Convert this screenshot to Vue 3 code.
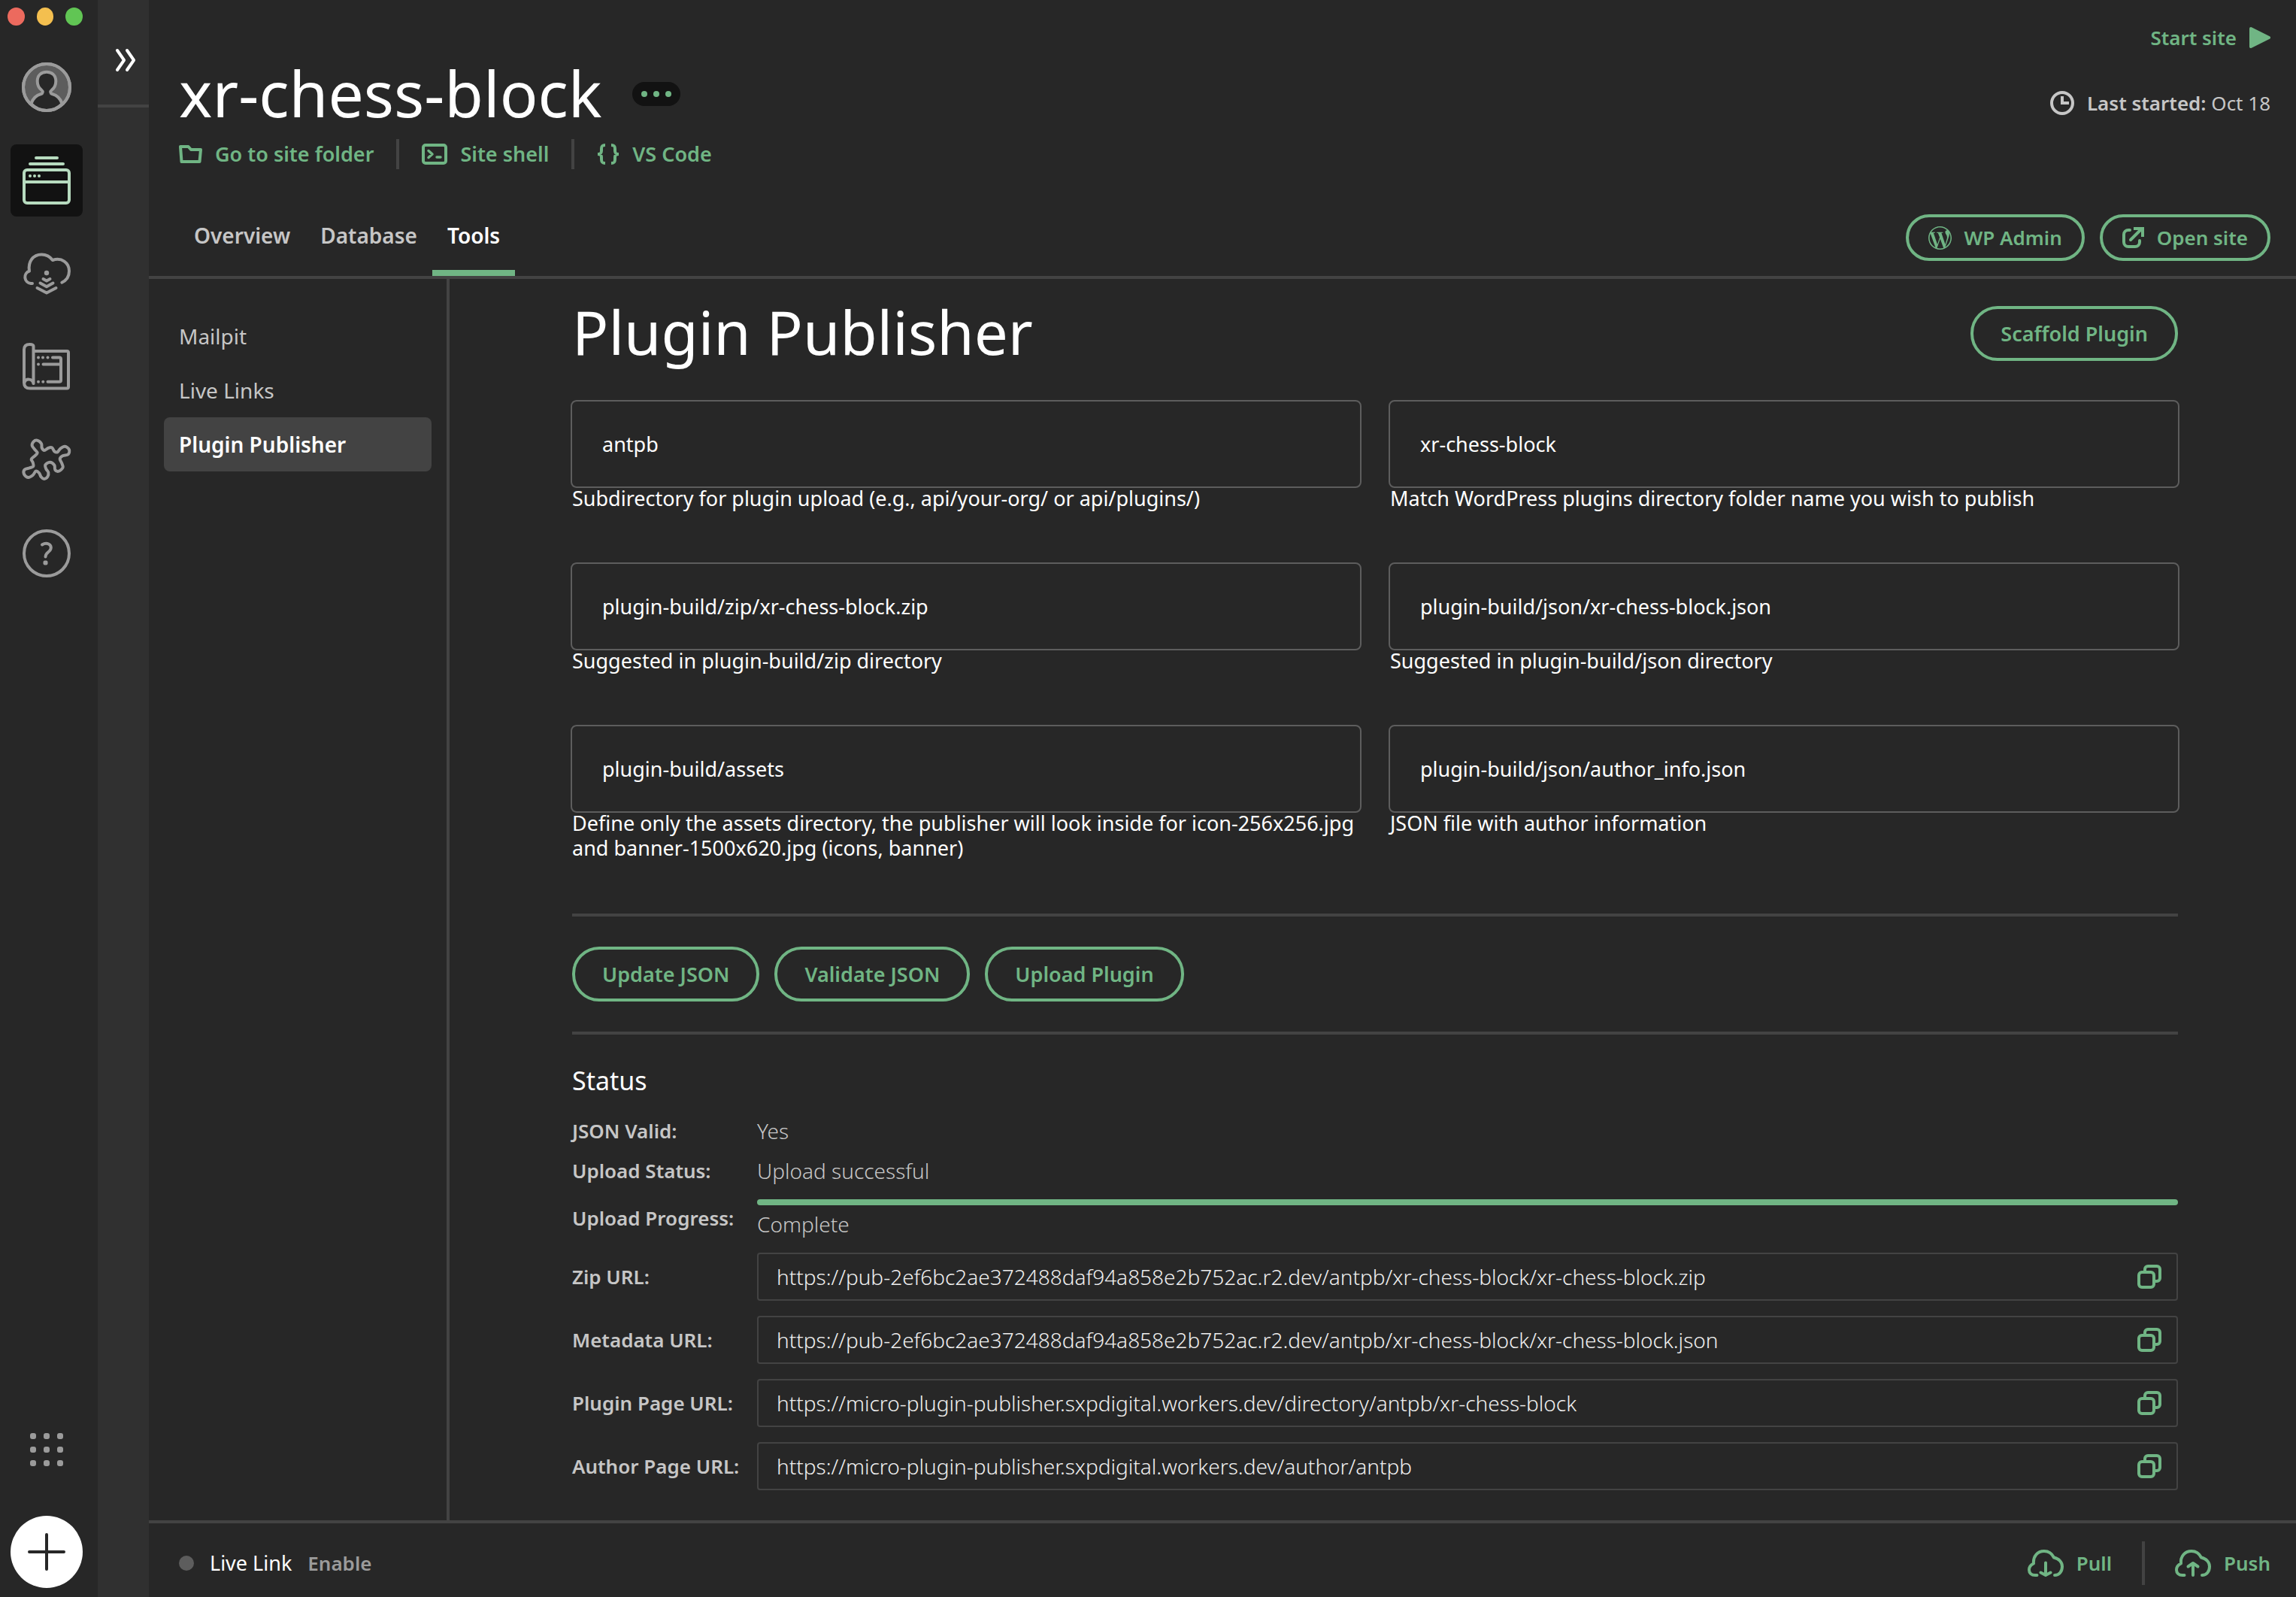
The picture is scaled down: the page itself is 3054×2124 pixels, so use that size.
<script setup>
import { reactive, ref } from 'vue'

// Closed Catmull-Rom curve through a list of points, as SVG path data
function smoothPath(points) {
  const n = points.length
  const at = (i) => points[(i + n) % n]
  let d = `M${at(0)[0]} ${at(0)[1]}`
  for (let i = 0; i < n; i++) {
    const [a, b, c, e] = [at(i - 1), at(i), at(i + 1), at(i + 2)]
    d += `C${b[0] + (c[0] - a[0]) / 6} ${b[1] + (c[1] - a[1]) / 6} ${c[0] - (e[0] - b[0]) / 6} ${c[1] - (e[1] - b[1]) / 6} ${c[0]} ${c[1]}`
  }
  return d + 'Z'
}

const puzzle = smoothPath(
  [
    [88, 782], [105, 795], [107, 812], [117, 822], [132, 813], [147, 811], [157, 826], [169, 829], [181, 815],
    [199, 806], [216, 819], [212, 838], [190, 844], [179, 856], [186, 872], [191, 890], [175, 905], [160, 900],
    [157, 881], [139, 869], [121, 880], [124, 896], [133, 910], [130, 927], [116, 936], [104, 928], [96, 912],
    [83, 905], [71, 921], [52, 930], [36, 917], [38, 899], [58, 892], [73, 886], [71, 870], [65, 857],
    [78, 845], [89, 832], [80, 820], [68, 803], [74, 787],
  ].map(([x, y]) => [x / 3 - 8, y / 3 - 256]),
)

const dots = [6, 24, 42].flatMap((y) => [6, 24, 42].map((x) => ({ x, y })))

const tabs = ['Overview', 'Database', 'Tools']
const tools = ['Mailpit', 'Live Links', 'Plugin Publisher']
const activeTab = ref('Tools')
const activeTool = ref('Plugin Publisher')

const fields = reactive([
  { id: 'subdirectory', value: 'antpb', help: 'Subdirectory for plugin upload (e.g., api/your-org/ or api/plugins/)' },
  { id: 'folder', value: 'xr-chess-block', help: 'Match WordPress plugins directory folder name you wish to publish' },
  { id: 'zip', value: 'plugin-build/zip/xr-chess-block.zip', help: 'Suggested in plugin-build/zip directory' },
  { id: 'json', value: 'plugin-build/json/xr-chess-block.json', help: 'Suggested in plugin-build/json directory' },
  { id: 'assets', value: 'plugin-build/assets', help: 'Define only the assets directory, the publisher will look inside for icon-256x256.jpg and banner-1500x620.jpg (icons, banner)' },
  { id: 'author', value: 'plugin-build/json/author_info.json', help: 'JSON file with author information' },
])

const actions = ['Update JSON', 'Validate JSON', 'Upload Plugin']

const bucket = 'https://pub-2ef6bc2ae372488daf94a858e2b752ac.r2.dev/antpb/xr-chess-block'
const workers = 'https://micro-plugin-publisher.sxpdigital.workers.dev'
const urls = [
  { id: 'zip-url', label: 'Zip URL:', value: `${bucket}/xr-chess-block.zip` },
  { id: 'metadata-url', label: 'Metadata URL:', value: `${bucket}/xr-chess-block.json` },
  { id: 'plugin-url', label: 'Plugin Page URL:', value: `${workers}/directory/antpb/xr-chess-block` },
  { id: 'author-url', label: 'Author Page URL:', value: `${workers}/author/antpb` },
]
</script>

<template>
  <div class="app">
    <nav class="rail" aria-label="Main">
      <div class="lights"><i class="red"></i><i class="yellow"></i><i class="green"></i></div>
      <button class="rail-item" aria-label="Account">
        <svg width="66" height="66" viewBox="0 0 66 66" fill="none" stroke="#9b9b9b" stroke-width="4">
          <circle cx="33" cy="33" r="31" fill="#5d5d5d" />
          <path fill="#272727" d="M12.3 55C15 47 20 43.500 25.500 42C28 41.200 28.500 38.500 26.500 37C22.500 34 20.700 30 20.700 25C20.700 17 26 12.700 33 12.700S45.300 17 45.300 25C45.300 30 43.500 34 39.500 37C37.500 38.500 38 41.200 40.500 42C46 43.500 51 47 53.700 55C48 61 40 64 33 64S18 61 12.300 55" />
          <circle cx="33" cy="33" r="31" />
        </svg>
      </button>
      <button class="rail-item active" aria-label="Sites">
        <svg width="68" height="68" viewBox="0 0 68 68" fill="none" stroke="#b7dbbf" stroke-width="4" stroke-linecap="round">
          <path d="M20 4H48M12 12H56M4 36H64" />
          <rect x="4" y="20" width="60" height="44" rx="4" />
          <g fill="#b7dbbf" stroke="none"><circle cx="12" cy="28" r="2" /><circle cx="18" cy="28" r="2" /><circle cx="24" cy="28" r="2" /></g>
        </svg>
      </button>
      <button class="rail-item" aria-label="Cloud backups">
        <svg width="68" height="68" viewBox="0 -3 68 68" fill="none" stroke="#9b9b9b" stroke-width="4" stroke-linecap="round" stroke-linejoin="round">
          <path d="M15 44H13A8.500 8.500 0 0 1 11 27.500C9 15 16 5.500 27.300 5.500C34 5.500 39 9 42 13C54 9 64 16.500 64 27.500C64 35 60 40 54.300 42.700M29.500 38L34 40.500L38.500 38M25.500 43.500L34 48.300L42.500 43.500M21.500 50L34 56.500L46.500 50" />
          <circle cx="34" cy="30" r="3.200" fill="#9b9b9b" stroke="none" />
        </svg>
      </button>
      <button class="rail-item" aria-label="Blueprints">
        <svg width="68" height="68" viewBox="0 1 68 68" fill="none" stroke="#9b9b9b" stroke-width="4" stroke-linecap="round" stroke-linejoin="round">
          <path d="M16.500 57V7.500Q16.500 5 11.500 5Q4 5 4 12V56C4 61 7 63.500 12 63.500H61Q63 63.500 63 61.500V16Q63 14 61 14H17M4.500 56C6 50 15 50 16.500 57" />
          <path d="M42 22.500H51Q53 22.500 53 24.500V52.700Q53 54.700 51 54.700H35.500M29.500 31.500H52" />
          <g fill="#9b9b9b" stroke="none">
            <circle cx="23" cy="22.500" r="2" /><circle cx="29" cy="22.500" r="2" /><circle cx="35.500" cy="22.500" r="2" />
            <circle cx="23" cy="31.500" r="2" /><circle cx="23" cy="54.700" r="2" /><circle cx="29.300" cy="54.700" r="2" />
          </g>
        </svg>
      </button>
      <button class="rail-item" aria-label="Add-ons">
        <svg width="68" height="68" viewBox="0 -3 68 68" fill="none" stroke="#9b9b9b" stroke-width="4" stroke-linejoin="round"><path :d="puzzle" /></svg>
      </button>
      <button class="rail-item" aria-label="Help">
        <svg width="68" height="68" viewBox="0 0 68 68" fill="none" stroke="#9b9b9b" stroke-width="4">
          <circle cx="34" cy="34" r="30" />
          <path stroke-linecap="round" d="M28 22.500C34 18.500 41 22 39.500 28C38.500 32.500 32.500 32.500 32.500 38.500" />
          <rect x="29.500" y="43.500" width="6" height="6" rx="2" fill="#9b9b9b" stroke="none" />
        </svg>
      </button>
      <div class="rail-end">
        <button class="rail-item" aria-label="Apps">
          <svg width="48" height="48" viewBox="0 0 48 48" fill="#9b9b9b">
            <rect v-for="d in dots" :key="`${d.x}-${d.y}`" :x="d.x - 4" :y="d.y - 4" width="8" height="8" rx="3" />
          </svg>
        </button>
        <button class="rail-item add" aria-label="Add site">
          <svg width="50" height="50" viewBox="0 0 50 50" stroke="#272727" stroke-width="4" stroke-linecap="round"><path d="M25 2V48M2 25H48" /></svg>
        </button>
      </div>
    </nav>

    <div class="strip">
      <button class="expand" aria-label="Expand site list">
        <svg width="28" height="32" viewBox="0 0 28 32" fill="none" stroke="#fff" stroke-width="4" stroke-linecap="round" stroke-linejoin="round"><path d="M3 3L12 16L3 29M16 3L25 16L16 29" /></svg>
      </button>
    </div>

    <main class="main">
      <header class="header">
        <div class="header-top">
          <div class="identity">
            <div class="title-row">
              <h1>xr-chess-block</h1>
              <button class="more" aria-label="More actions"><i></i><i></i><i></i></button>
            </div>
            <div class="links">
              <a href="#">
                <svg width="31" height="24" viewBox="0 0 31 24" fill="none" stroke="currentColor" stroke-width="4" stroke-linejoin="round"><path d="M2 2H12.500L16 6H29L27.500 22H3.500Z" /></svg>
                Go to site folder
              </a>
              <a href="#">
                <svg width="34" height="28" viewBox="0 0 34 28" fill="none" stroke="currentColor" stroke-width="4" stroke-linejoin="round"><rect x="2" y="2" width="30" height="24" rx="3" /><path stroke-width="3.500" stroke-linecap="round" d="M9 9.500L14 14L9 18.500M20 18H25" /></svg>
                Site shell
              </a>
              <a href="#">
                <svg width="30" height="28" viewBox="0 0 30 28" fill="none" stroke="currentColor" stroke-width="4"><path d="M11 2C6.500 2 6 4 6 7V9.500C6 12.500 5 14 1 14C5 14 6 15.500 6 18.500V21C6 24 6.500 26 11 26M19 2C23.500 2 24 4 24 7V9.500C24 12.500 25 14 29 14C25 14 24 15.500 24 18.500V21C24 24 23.500 26 19 26" /></svg>
                VS Code
              </a>
            </div>
          </div>
          <div class="site-state">
            <button class="start">
              Start site
              <svg width="28" height="28" viewBox="0 0 28 28" fill="currentColor" stroke="currentColor" stroke-width="4" stroke-linejoin="round"><path d="M2 2L26 14L2 26Z" /></svg>
            </button>
            <div class="last">
              <svg width="32" height="32" viewBox="0 0 32 32" fill="none" stroke="currentColor" stroke-width="4"><circle cx="16" cy="16" r="14" /><path d="M16 7V16H25" /></svg>
              <span><b>Last started:</b> Oct 18</span>
            </div>
          </div>
        </div>
        <div class="tab-row">
          <nav class="tabs" aria-label="Site">
            <button v-for="t in tabs" :key="t" class="tab" :class="{ current: t === activeTab }" @click="activeTab = t">{{ t }}</button>
          </nav>
          <div class="site-buttons">
            <button class="pill small">
              <svg width="31" height="31" viewBox="0 0 24 24" fill="currentColor"><path d="M21.469 6.825c.84 1.537 1.318 3.300 1.318 5.175 0 3.979-2.156 7.456-5.363 9.325l3.295-9.527c.615-1.540.820-2.771.820-3.864 0-.405-.026-.780-.070-1.110m-7.981.105c.647-.030 1.232-.105 1.232-.105.582-.075.514-.930-.067-.899 0 0-1.755.135-2.880.135-1.064 0-2.850-.150-2.850-.150-.585-.030-.661.855-.075.885 0 0 .540.061 1.125.090l1.680 4.605-2.370 7.080L5.354 6.900c.649-.030 1.234-.100 1.234-.100.585-.075.516-.930-.065-.896 0 0-1.746.138-2.874.138-.200 0-.438-.008-.690-.015C4.911 3.150 8.235 1.215 12 1.215c2.809 0 5.365 1.072 7.286 2.833-.046-.003-.091-.009-.141-.009-1.060 0-1.812.923-1.812 1.914 0 .890.513 1.643 1.060 2.531.411.720.890 1.643.890 2.977 0 .915-.354 1.994-.821 3.479l-1.075 3.585-3.900-11.610.001.014zM12 22.784c-1.059 0-2.081-.153-3.048-.437l3.237-9.406 3.315 9.087c.024.053.050.101.078.149-1.120.393-2.325.609-3.582.609M1.211 12c0-1.564.336-3.050.935-4.390L7.290 21.709C3.694 19.960 1.212 16.271 1.211 12M12 0C5.385 0 0 5.385 0 12s5.385 12 12 12 12-5.385 12-12S18.615 0 12 0" /></svg>
              WP Admin
            </button>
            <button class="pill small">
              <svg width="29" height="28" viewBox="0 0 29 28" fill="none" stroke="currentColor" stroke-width="4" stroke-linecap="round"><path d="M10 4H8A6 6 0 0 0 2 10V20A6 6 0 0 0 8 26H17A6 6 0 0 0 23 20V18M11 17L25 3" /><path stroke-linecap="butt" d="M15 2H27V13" /></svg>
              Open site
            </button>
          </div>
        </div>
      </header>

      <div class="body">
        <nav class="sidebar" aria-label="Tools">
          <button v-for="t in tools" :key="t" class="tool" :class="{ current: t === activeTool }" @click="activeTool = t">{{ t }}</button>
        </nav>

        <section class="content">
          <div class="heading">
            <h2>Plugin Publisher</h2>
            <button class="pill">Scaffold Plugin</button>
          </div>

          <form class="fields" @submit.prevent>
            <div v-for="f in fields" :key="f.id" class="field">
              <input :id="f.id" v-model="f.value" type="text" />
              <label :for="f.id">{{ f.help }}</label>
            </div>
          </form>

          <div class="actions">
            <button v-for="a in actions" :key="a" class="pill">{{ a }}</button>
          </div>

          <h3>Status</h3>
          <dl class="status">
            <dt>JSON Valid:</dt>
            <dd>Yes</dd>
            <dt>Upload Status:</dt>
            <dd>Upload successful</dd>
            <dt>Upload Progress:</dt>
            <dd class="progress">
              <div class="track" role="progressbar" aria-label="Upload progress" aria-valuenow="100"></div>
              Complete
            </dd>
            <template v-for="u in urls" :key="u.id">
              <dt><label :for="u.id">{{ u.label }}</label></dt>
              <dd class="url">
                <input :id="u.id" type="text" readonly :value="u.value" />
                <button class="copy" :aria-label="`Copy ${u.label}`">
                  <svg width="32" height="32" viewBox="0 0 32 32" fill="none" stroke="currentColor" stroke-width="4"><rect x="2" y="10" width="20" height="20" rx="4" /><path d="M10 10V6A4 4 0 0 1 14 2H26A4 4 0 0 1 30 6V18A4 4 0 0 1 26 22H22" /></svg>
                </button>
              </dd>
            </template>
          </dl>
        </section>
      </div>

      <footer class="footer">
        <div class="live">
          <i class="dot"></i>
          <span>Live Link</span>
          <button class="enable">Enable</button>
        </div>
        <div class="sync">
          <button>
            <svg width="48" height="36" viewBox="0 0 48 36" fill="none" stroke="currentColor" stroke-width="4" stroke-linecap="round" stroke-linejoin="round"><path d="M12.500 34H10C5 34 2 31 2 27C2 23 4.500 20 8 18.500C7 9 13 2 22 2C28 2 32.500 5.500 35 10.500C42 12 46 17 46 22.500C46 29 42 34 36 34M24 17.500V34M17.500 30.500L24 34L30.500 30.500" /></svg>
            Pull
          </button>
          <button>
            <svg width="48" height="36" viewBox="0 0 48 36" fill="none" stroke="currentColor" stroke-width="4" stroke-linecap="round" stroke-linejoin="round"><path d="M12.500 34H10C5 34 2 31 2 27C2 23 4.500 20 8 18.500C7 9 13 2 22 2C28 2 32.500 5.500 35 10.500C42 12 46 17 46 22.500C46 29 42 34 36 34M24 34V18M17.500 22.500L24 18L30.500 22.500" /></svg>
            Push
          </button>
        </div>
      </footer>
    </main>
  </div>
</template>

<style>
html,
body {
  margin: 0;
  background: #272727;
}
</style>

<style scoped>
* {
  box-sizing: border-box;
}

.app {
  display: flex;
  min-height: 100vh;
  background: #272727;
  color: #fff;
  font: 400 27px/40px "Noto Sans", "Open Sans", sans-serif;
}

button {
  margin: 0;
  padding: 0;
  border: 0;
  background: none;
  color: inherit;
  font: inherit;
  cursor: pointer;
}

svg {
  display: block;
  flex: none;
}

h1,
h2,
h3,
dl,
dd {
  margin: 0;
  font-weight: 400;
}

/* Icon rail */
.rail {
  display: flex;
  flex: none;
  flex-direction: column;
  gap: 28px;
  width: 130px;
  padding: 10px 20px 12px 14px;
}

.lights {
  display: flex;
  gap: 16px;
  height: 30px;
  margin-left: -4px;
}

.lights i {
  width: 24px;
  height: 24px;
  border-radius: 50%;
}

.red {
  background: #ec6a5e;
}

.yellow {
  background: #f4bf4f;
}

.green {
  background: #61c554;
}

.rail-item {
  display: flex;
  flex: none;
  align-items: center;
  justify-content: center;
  width: 96px;
  height: 96px;
  border-radius: 8px;
}

.rail-item.active {
  background: #121212;
}

.rail-end {
  display: flex;
  flex-direction: column;
  gap: 40px;
  margin-top: auto;
}

.rail-item.add {
  border-radius: 50%;
  background: #fff;
}

.strip {
  flex: none;
  width: 68px;
  background: #303030;
}

.expand {
  display: flex;
  align-items: center;
  justify-content: center;
  width: 100%;
  height: 143px;
  padding: 20px 0 0 6px;
  border-bottom: 4px solid #434343;
}

/* Header */
.main {
  display: flex;
  flex: 1;
  flex-direction: column;
  min-width: 0;
}

.header {
  border-bottom: 4px solid #434343;
}

.header-top {
  display: flex;
  justify-content: space-between;
  padding: 0 34px 34px 40px;
}

.identity {
  padding-top: 74px;
}

.title-row {
  display: flex;
  align-items: center;
  gap: 40px;
  height: 100px;
}

h1 {
  font-size: 84px;
  line-height: 100px;
}

.more {
  display: flex;
  align-items: center;
  justify-content: center;
  gap: 8px;
  width: 64px;
  height: 32px;
  margin-top: 2px;
  border-radius: 16px;
  background: #121212;
}

.more i {
  width: 8px;
  height: 8px;
  border-radius: 50%;
  background: #70b584;
}

.links {
  display: flex;
  margin-top: 11px;
}

.links a {
  display: flex;
  align-items: center;
  gap: 17px;
  color: #70b584;
  font-weight: 600;
  text-decoration: none;
}

.links a + a {
  margin-left: 30px;
  padding-left: 30px;
  border-left: 4px solid #434343;
}

.site-state {
  display: flex;
  flex-direction: column;
  align-items: flex-end;
  gap: 47px;
  padding-top: 30px;
}

.start,
.last {
  display: flex;
  align-items: center;
  gap: 17px;
}

.start {
  color: #70b584;
  font-size: 26px;
  font-weight: 600;
}

.last {
  color: #c6c6c6;
  font-size: 26px;
}

.last b {
  font-weight: 600;
}

.tab-row {
  display: flex;
  align-items: flex-end;
  justify-content: space-between;
  padding: 0 34px 0 40px;
}

.tabs {
  display: flex;
}

.tab {
  height: 108px;
  padding: 0 20px;
  color: #c6c6c6;
  font-size: 28px;
  font-weight: 600;
}

.tab.current {
  box-shadow: inset 0 -8px #70b584;
  color: #fff;
}

.site-buttons {
  display: flex;
  gap: 20px;
  padding-bottom: 20px;
}

.pill {
  display: flex;
  align-items: center;
  height: 73px;
  padding: 0 36px;
  border: 4px solid #70b584;
  border-radius: 36px;
  color: #70b584;
  font-weight: 600;
}

.pill.small {
  gap: 17px;
  height: 62px;
  padding: 0 26px;
  border-radius: 31px;
  font-size: 26px;
}

/* Body */
.body {
  display: flex;
  flex: 1;
}

.sidebar {
  display: flex;
  flex: none;
  flex-direction: column;
  width: 400px;
  padding: 40px 20px;
  border-right: 4px solid #434343;
}

.tool {
  height: 72px;
  padding: 0 20px;
  border-radius: 8px;
  color: #c6c6c6;
  font-size: 28px;
  text-align: left;
}

.tool.current {
  background: #434343;
  color: #fff;
  font-weight: 600;
}

.content {
  flex: 1;
  min-width: 0;
  padding: 36px 157px 30px 163px;
}

.heading {
  display: flex;
  align-items: flex-start;
  justify-content: space-between;
}

h2 {
  font-size: 80px;
  line-height: 68px;
}

.fields {
  display: grid;
  grid-template-columns: 1fr 1fr;
  gap: 69px 36px;
  margin: 52px -2px 71px;
}

.field input {
  display: block;
  width: 100%;
  height: 117px;
  padding: 0 40px;
  border: 2px solid #5d5d5d;
  border-radius: 8px;
  outline: 0;
  background: none;
  color: #fff;
  font: inherit;
}

.field label {
  display: block;
  margin-top: -3px;
  padding-left: 2px;
  line-height: 33px;
}

.actions {
  display: flex;
  gap: 20px;
  padding: 40px 0;
  border: solid #434343;
  border-width: 4px 0;
}

h3 {
  margin-top: 39px;
  font-size: 34px;
  line-height: 44px;
}

.status {
  display: grid;
  grid-template-columns: 246px 1fr;
  align-items: center;
  margin-top: 19px;
  line-height: 53px;
}

dt {
  color: #c6c6c6;
  font-size: 26px;
  font-weight: 600;
}

dd {
  color: #c6c6c6;
  font-size: 28px;
  font-weight: 300;
}

.progress {
  padding: 11px 0 8px;
  line-height: 40px;
}

.track {
  height: 8px;
  margin-bottom: 5px;
  border-radius: 4px;
  background: #70b584;
}

.url {
  display: flex;
  align-items: center;
  height: 64px;
  margin: 10px 0;
  padding: 0 20px 0 24px;
  border: 2px solid #434343;
  border-radius: 4px;
}

.url input {
  flex: 1;
  min-width: 0;
  padding: 0;
  border: 0;
  outline: 0;
  background: none;
  color: #eee;
  font: inherit;
}

.copy {
  color: #70b584;
}

/* Footer */
.footer {
  display: flex;
  align-items: center;
  justify-content: space-between;
  height: 102px;
  padding: 8px 34px 0 40px;
  border-top: 4px solid #434343;
}

.live,
.sync,
.sync button {
  display: flex;
  align-items: center;
}

.live {
  gap: 21px;
}

.dot {
  width: 20px;
  height: 20px;
  border-radius: 50%;
  background: #5d5d5d;
}

.enable {
  color: #9b9b9b;
  font-size: 26px;
  font-weight: 600;
}

.sync button {
  gap: 17px;
  height: 58px;
  color: #70b584;
  font-size: 26px;
  font-weight: 600;
}

.sync button + button {
  margin-left: 40px;
  padding-left: 40px;
  border-left: 4px solid #434343;
}
</style>
